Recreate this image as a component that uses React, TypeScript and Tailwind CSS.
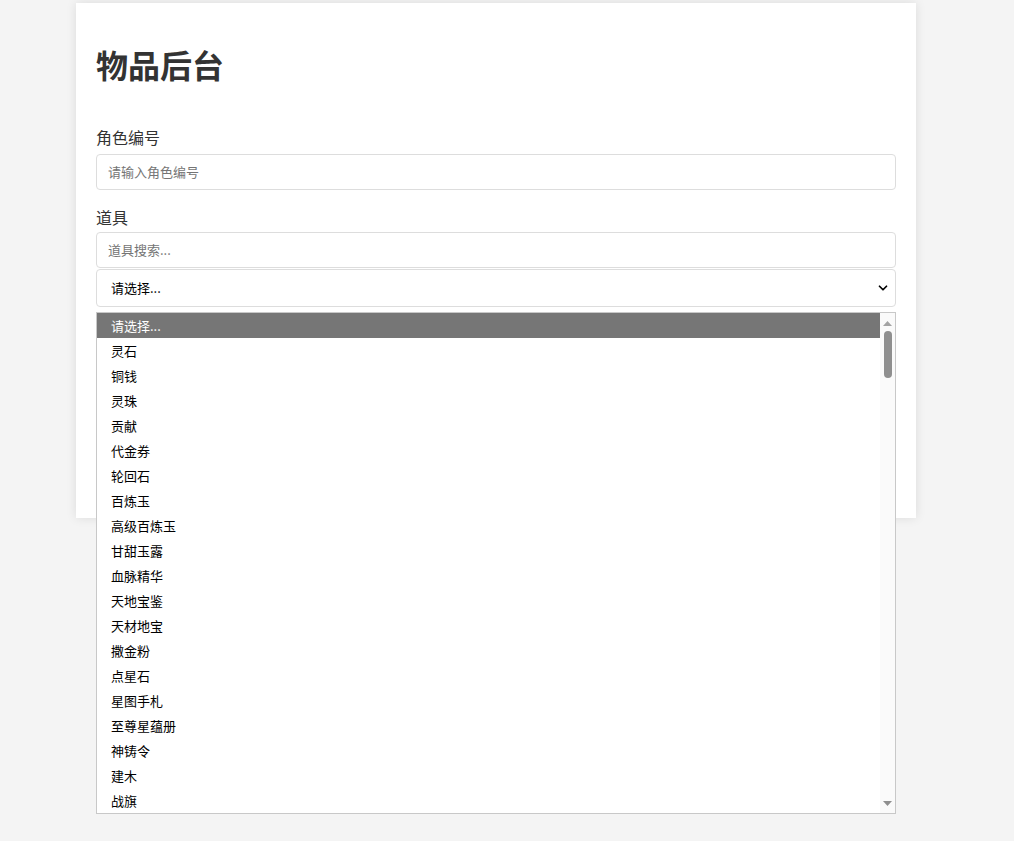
import React from 'react';
import { ChevronDown } from 'lucide-react';

const items = [
  '灵石', '铜钱', '灵珠', '贡献', '代金券', '轮回石', '百炼玉', '高级百炼玉', '甘甜玉露',
  '血脉精华', '天地宝鉴', '天材地宝', '撒金粉', '点星石', '星图手札', '至尊星蕴册', '神铸令', '建木', '战旗',
];

const font = { fontFamily: '"Noto Sans CJK SC", "Liberation Sans", sans-serif' };

export default function App() {
  return (
    <div className="relative min-h-[841px] bg-[#f4f4f4] text-[#333]" style={font}>
      <div className="pt-[3px]">
        {/* Card */}
        <div className="ml-[76px] w-[840px] h-[515px] bg-white shadow-[0_0_10px_rgba(0,0,0,0.1)] px-5 pt-[41px]">
          <h1 className="text-[32px] leading-[40px] font-bold text-[#333]">物品后台</h1>

          <div className="mt-[41px]">
            <label className="block text-[16px] leading-[24px] text-[#333] mb-[5px]">角色编号</label>
            <div className="h-9 border border-[#ddd] rounded-[4px] px-[11px] flex items-center text-[13px] text-[#757575]">
              请输入角色编号
            </div>
          </div>

          <div className="mt-[15px]">
            <label className="block text-[16px] leading-[24px] text-[#333] mb-[3px]">道具</label>
            <div className="h-9 border border-[#ddd] rounded-[4px] px-[11px] flex items-center text-[13px] text-[#757575]">
              道具搜索...
            </div>
            <div className="mt-px h-[38px] border border-[#ddd] rounded-[4px] pl-[14px] pr-[5px] flex items-center justify-between text-[13px] text-black">
              <span>请选择...</span>
              <ChevronDown size={14} strokeWidth={3} className="text-black" />
            </div>
          </div>
        </div>
      </div>

      {/* Open select popup */}
      <div className="absolute left-[96px] top-[312px] w-[800px] h-[502px] bg-white border border-[#c8c8c8] flex text-[13px] text-black">
        <ul className="flex-1">
          <li className="h-[25px] flex items-center pl-[14px] bg-[#767676] text-white">请选择...</li>
          {items.map((it) => (
            <li key={it} className="h-[25px] flex items-center pl-[14px]">{it}</li>
          ))}
        </ul>
        <div className="w-[15px] bg-[#fafafa] flex flex-col items-center">
          <svg width="9" height="5" viewBox="0 0 9 5" className="mt-[8px]">
            <path d="M0 5 L4.5 0 L9 5 Z" fill="#a3a3a3" />
          </svg>
          <div className="mt-[5px] w-[8px] h-[47px] rounded-full bg-[#8f8f8f]" />
          <div className="flex-1" />
          <svg width="9" height="5" viewBox="0 0 9 5" className="mb-[7px]">
            <path d="M0 0 L9 0 L4.5 5 Z" fill="#8f8f8f" />
          </svg>
        </div>
      </div>
    </div>
  );
}
